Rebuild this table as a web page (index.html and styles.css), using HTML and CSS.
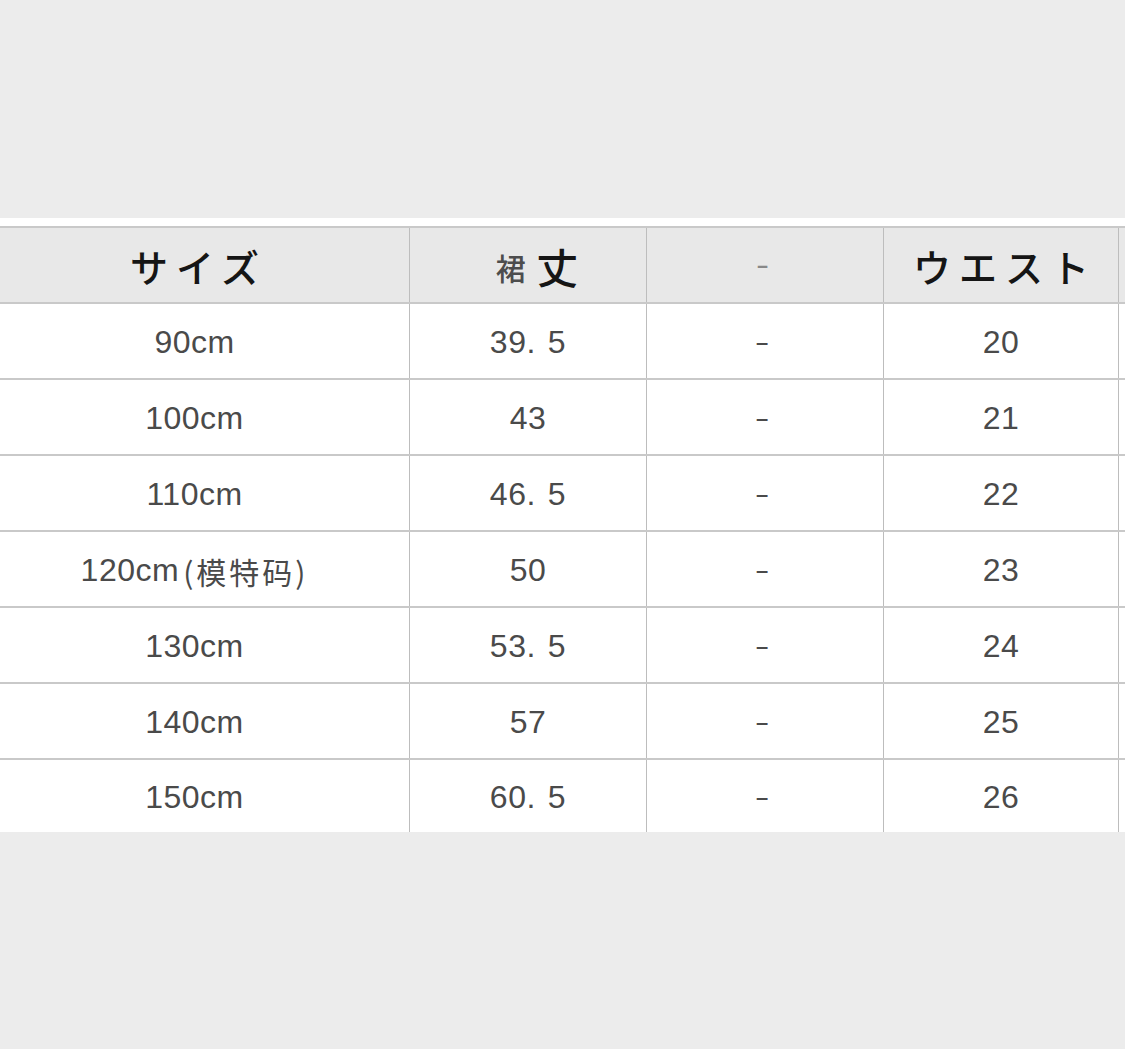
FILE: index.html
```html
<!DOCTYPE html>
<html lang="ja">
<head>
<meta charset="utf-8">
<title>サイズ表</title>
<link rel="stylesheet" href="styles.css">
</head>
<body>
<div class="page">
  <section class="band">
    <div class="table">
      <div class="row head">
        <div class="cell c1"><span class="jp">サイズ</span></div>
        <div class="cell c2"><span class="small">裙</span><span class="jp big">丈</span></div>
        <div class="cell c3"><span class="hdash">-</span></div>
        <div class="cell c4"><span class="jp">ウエスト</span></div>
        <div class="cell c5"></div>
      </div>
      <div class="row">
        <div class="cell c1">90cm</div>
        <div class="cell c2">39<span class="dot">.</span>5</div>
        <div class="cell c3"><span class="dash">-</span></div>
        <div class="cell c4">20</div>
        <div class="cell c5"></div>
      </div>
      <div class="row">
        <div class="cell c1">100cm</div>
        <div class="cell c2">43</div>
        <div class="cell c3"><span class="dash">-</span></div>
        <div class="cell c4">21</div>
        <div class="cell c5"></div>
      </div>
      <div class="row">
        <div class="cell c1">110cm</div>
        <div class="cell c2">46<span class="dot">.</span>5</div>
        <div class="cell c3"><span class="dash">-</span></div>
        <div class="cell c4">22</div>
        <div class="cell c5"></div>
      </div>
      <div class="row">
        <div class="cell c1">120cm<span class="cn">(模特码)</span></div>
        <div class="cell c2">50</div>
        <div class="cell c3"><span class="dash">-</span></div>
        <div class="cell c4">23</div>
        <div class="cell c5"></div>
      </div>
      <div class="row">
        <div class="cell c1">130cm</div>
        <div class="cell c2">53<span class="dot">.</span>5</div>
        <div class="cell c3"><span class="dash">-</span></div>
        <div class="cell c4">24</div>
        <div class="cell c5"></div>
      </div>
      <div class="row">
        <div class="cell c1">140cm</div>
        <div class="cell c2">57</div>
        <div class="cell c3"><span class="dash">-</span></div>
        <div class="cell c4">25</div>
        <div class="cell c5"></div>
      </div>
      <div class="row last">
        <div class="cell c1">150cm</div>
        <div class="cell c2">60<span class="dot">.</span>5</div>
        <div class="cell c3"><span class="dash">-</span></div>
        <div class="cell c4">26</div>
        <div class="cell c5"></div>
      </div>
    </div>
  </section>
</div>
</body>
</html>
```

FILE: styles.css
```css
html, body {
  margin: 0;
  padding: 0;
  background: #ececec;
}

.page {
  width: 1125px;
  height: 1049px;
  padding-top: 218px;
  box-sizing: border-box;
  overflow: hidden;
}

.band {
  background: #ffffff;
  padding-top: 8px;
}

.table {
  border-top: 2px solid #c9c9c9;
}

.row {
  display: grid;
  grid-template-columns: 410px 237px 237px 235px 1fr;
  height: 76px;
  box-sizing: border-box;
  border-bottom: 2px solid #c9c9c9;
}

.row.head {
  height: 76px;
  background: #e8e8e8;
}

.row.last {
  border-bottom: none;
  height: 72px;
}

.cell {
  display: flex;
  align-items: center;
  justify-content: center;
  border-right: 1px solid #bdbdbd;
  font-family: "Liberation Sans", "Noto Sans CJK SC", sans-serif;
  font-size: 32px;
  color: #4a4a4a;
  letter-spacing: 0.5px;
  padding-top: 3px;
}

.cell.c1 {
  padding-right: 20px;
}

.cell.c5 {
  border-right: none;
}

.head .cell {
  padding-top: 0;
}

.jp {
  font-family: "Noto Sans CJK JP", sans-serif;
  font-size: 38px;
  font-weight: 500;
  color: #151515;
  letter-spacing: 8px;
  margin-right: -8px;
}

.small {
  font-family: "Noto Sans CJK SC", sans-serif;
  font-size: 30px;
  font-weight: 500;
  color: #4d4d4d;
  margin-left: 18px;
  margin-right: 10px;
  margin-top: 4px;
}

.big {
  font-family: "Noto Sans CJK SC", sans-serif;
  font-size: 42px;
}

.hdash {
  color: #888888;
  font-size: 28px;
  margin-left: -4px;
  display: inline-block;
  transform: scaleX(1.4);
}

.dash {
  color: #4a4a4a;
  font-size: 26px;
  margin-left: -4px;
  display: inline-block;
  transform: scaleX(1.7);
}

.dot {
  margin-right: 12px;
}

.cn {
  font-family: "Noto Sans CJK SC", sans-serif;
  font-size: 30px;
  letter-spacing: 3px;
  margin-left: 4px;
  color: #4a4a4a;
}
```
